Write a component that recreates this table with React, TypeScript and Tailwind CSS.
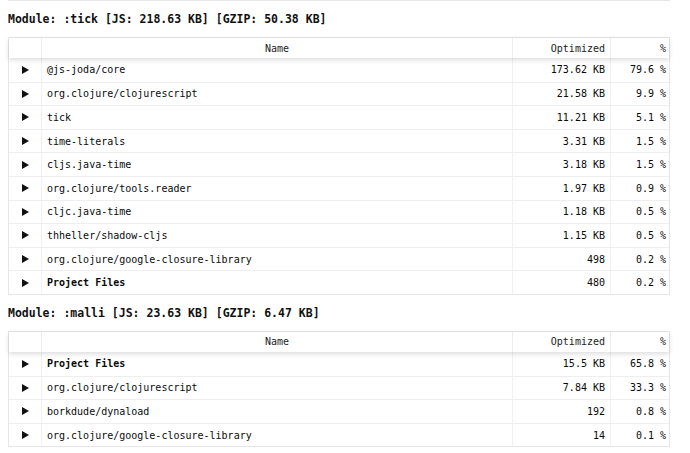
import React from "react";

type Row = { name: string; size: string; pct: string; bold?: boolean };

interface Module {
  title: string;
  rows: Row[];
}

const modules: Module[] = [
  {
    title: "Module: :tick [JS: 218.63 KB] [GZIP: 50.38 KB]",
    rows: [
      { name: "@js-joda/core", size: "173.62 KB", pct: "79.6 %" },
      { name: "org.clojure/clojurescript", size: "21.58 KB", pct: "9.9 %" },
      { name: "tick", size: "11.21 KB", pct: "5.1 %" },
      { name: "time-literals", size: "3.31 KB", pct: "1.5 %" },
      { name: "cljs.java-time", size: "3.18 KB", pct: "1.5 %" },
      { name: "org.clojure/tools.reader", size: "1.97 KB", pct: "0.9 %" },
      { name: "cljc.java-time", size: "1.18 KB", pct: "0.5 %" },
      { name: "thheller/shadow-cljs", size: "1.15 KB", pct: "0.5 %" },
      { name: "org.clojure/google-closure-library", size: "498", pct: "0.2 %" },
      { name: "Project Files", size: "480", pct: "0.2 %", bold: true },
    ],
  },
  {
    title: "Module: :malli [JS: 23.63 KB] [GZIP: 6.47 KB]",
    rows: [
      { name: "Project Files", size: "15.5 KB", pct: "65.8 %", bold: true },
      { name: "org.clojure/clojurescript", size: "7.84 KB", pct: "33.3 %" },
      { name: "borkdude/dynaload", size: "192", pct: "0.8 %" },
      { name: "org.clojure/google-closure-library", size: "14", pct: "0.1 %" },
    ],
  },
];

const cols = "grid grid-cols-[33px_471px_98px_60px]";

function Arrow() {
  return (
    <svg width="7" height="8" viewBox="0 0 7 8" className="block">
      <path d="M0 0 L7 4 L0 8 Z" fill="#111" />
    </svg>
  );
}

function ModuleTable({ module }: { module: Module }) {
  return (
    <div>
      <h2 className="mt-[10px] mb-[10px] text-[11.5px] leading-[16px] font-bold text-[#111]">{module.title}</h2>
      <div className="border border-[#e6e6e6] w-[662px]">
        {/* header */}
        <div className={`${cols} h-[20px] items-stretch relative z-10 shadow-[0_2px_5px_rgba(0,0,0,0.14)] bg-white text-[#222]`}>
          <div className="border-r border-[#eeeeee]" />
          <div className="border-r border-[#eeeeee] flex items-center justify-center">Name</div>
          <div className="border-r border-[#eeeeee] flex items-center justify-end pr-[5px]">Optimized</div>
          <div className="flex items-center justify-end pr-[5px]">%</div>
        </div>
        {module.rows.map((r, i) => (
          <div
            key={r.name}
            className={`${cols} h-[23.6px] text-[#0a0a0a] ${i > 0 ? "border-t border-[#eeeeee]" : ""}`}
          >
            <div className="border-r border-[#f1f1f1] flex items-center justify-center">
              <Arrow />
            </div>
            <div className={`border-r border-[#f1f1f1] flex items-center pl-[5px] ${r.bold ? "font-bold" : ""}`}>
              {r.name}
            </div>
            <div className="border-r border-[#f1f1f1] flex items-center justify-end pr-[5px]">{r.size}</div>
            <div className="flex items-center justify-end pr-[5px]">{r.pct}</div>
          </div>
        ))}
      </div>
    </div>
  );
}

export default function App() {
  return (
    <div className="w-[690px] h-[453px] overflow-hidden bg-white px-[8px] font-['DejaVu_Sans_Mono',monospace] text-[10px]">
      {/* tail of the previous table */}
      <div className="w-[662px] h-[1px] bg-[#e6e6e6]" />
      {modules.map((m) => (
        <ModuleTable key={m.title} module={m} />
      ))}
    </div>
  );
}
